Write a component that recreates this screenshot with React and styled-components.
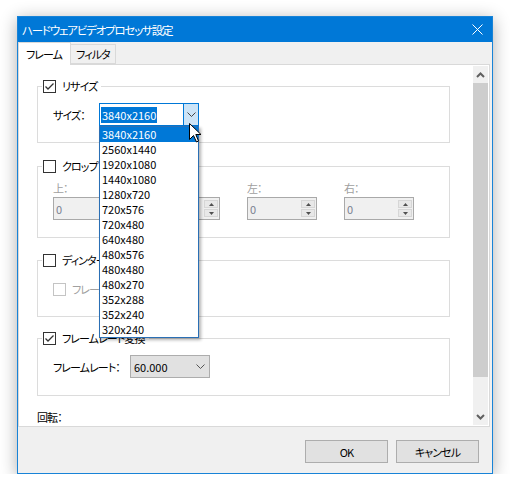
import React from "react";
import styled, { createGlobalStyle } from "styled-components";

const GlobalStyle = createGlobalStyle`
html, body {
  margin: 0;
  padding: 0;
  background: #ffffff;
}
body {
  font-family: "Noto Sans CJK JP", "Noto Sans", sans-serif;
  font-size: 11px;
  font-feature-settings: "palt";
  color: #000;
}
`;

// Japanese UI text: Noto is wider than Meiryo UI, so it is tightened
const jp = `
letter-spacing: -0.9px;
white-space: nowrap;
`;

const Page = styled.div`
padding: 16px 0 0 17px;
`;

const Window = styled.div`
box-sizing: border-box;
width: 476px;
height: 458px;
border: 1px solid #1883d7;
background: #f0f0f0;
box-shadow: 0 3px 16px rgba(0, 0, 0, 0.32);
display: flex;
flex-direction: column;
`;

const TitleBar = styled.div`
height: 25px;
flex-shrink: 0;
background: #0078d7;
color: #fff;
display: flex;
align-items: center;
justify-content: space-between;
padding: 0 9px 0 4px;
line-height: 16px;
`;

const TitleText = styled.span`
${jp}
letter-spacing: -1.2px;
font-size: 11.5px;
`;

const TabStrip = styled.div`
display: flex;
align-items: flex-end;
height: 22px;
flex-shrink: 0;
position: relative;
z-index: 2;
`;

const Tab = styled.div`
${jp}
box-sizing: border-box;
height: ${p => (p.$active ? 23 : 20)}px;
margin-bottom: ${p => (p.$active ? -1 : 0)}px;
padding: 0 ${p => (p.$active ? 8 : 5)}px 0 ${p => (p.$active ? 7 : 5)}px;
background: ${p => (p.$active ? "#ffffff" : "#f0f0f0")};
border: 1px solid #d9d9d9;
border-bottom: ${p => (p.$active ? "none" : "1px solid #d9d9d9")};
border-left: ${p => (p.$active ? "1px solid #d9d9d9" : "none")};
display: flex;
align-items: center;
line-height: 16px;
`;

const Panel = styled.div`
box-sizing: border-box;
height: 363px;
margin-right: 2px;
border: 1px solid #d9d9d9;
background: #fff;
padding: 1px;
display: flex;
`;

const ScrollArea = styled.div`
flex: 1;
overflow: hidden;
padding: 12px 23px 0 17px;
`;

const Scrollbar = styled.div`
width: 15px;
display: flex;
flex-direction: column;
background: #f0f0f0;
`;

const ScrollButton = styled.div`
height: 17px;
display: flex;
align-items: center;
justify-content: center;
`;

const ScrollThumb = styled.div`
height: 294px;
background: #cdcdcd;
`;

const ScrollTrack = styled.div`
flex: 1;
`;

const Group = styled.fieldset`
margin: ${p => p.$top || 0}px 0 0;
border: 1px solid #dcdcdc;
padding: ${p => p.$pt}px 15px ${p => p.$pb}px;
min-inline-size: 0;
`;

const Legend = styled.legend`
padding: 0 4px 0 1px;
margin-left: -11px;
height: 16px;
`;

const LegendInner = styled.span`
${jp}
display: flex;
align-items: center;
gap: 6px;
height: 16px;
line-height: 16px;
`;

const Box = styled.span`
box-sizing: border-box;
width: 13px;
height: 13px;
border: 1px solid ${p => (p.$disabled ? "#c4c4c4" : "#333333")};
background: #fff;
display: flex;
align-items: center;
justify-content: center;
flex-shrink: 0;
`;

const Row = styled.div`
display: flex;
align-items: center;
gap: ${p => p.$gap || 0}px;
`;

const Label = styled.span`
${jp}
width: ${p => (p.$w ? `${p.$w}px` : "auto")};
flex-shrink: 0;
line-height: 16px;
color: ${p => (p.$disabled ? "#a0a0a0" : "#000")};
`;

const ComboWrap = styled.div`
position: relative;
z-index: 10;
`;

const Combo = styled.div`
box-sizing: border-box;
width: ${p => p.$w}px;
height: 23px;
border: 1px solid ${p => (p.$focus ? "#0078d7" : "#adadad")};
background: ${p => (p.$focus ? "#ffffff" : "#e1e1e1")};
display: flex;
align-items: center;
`;

const ComboText = styled.div`
flex: 1;
padding-left: ${p => (p.$focus ? 1 : 3)}px;
line-height: 16px;
display: flex;
`;

const Highlight = styled.span`
background: #0078d7;
color: #fff;
padding: 0 1px;
line-height: 16px;
`;

const ComboButton = styled.div`
box-sizing: border-box;
width: ${p => (p.$focus ? 15 : 18)}px;
height: 100%;
background: ${p => (p.$focus ? "#cce4f7" : "transparent")};
border-left: ${p => (p.$focus ? "1px solid #0078d7" : "none")};
display: flex;
align-items: center;
justify-content: center;
`;

const DropList = styled.div`
position: absolute;
left: 0;
top: 100%;
box-sizing: border-box;
width: 100px;
border: 1px solid #2a6fb5;
background: #fff;
box-shadow: 2px 2px 3px rgba(0, 0, 0, 0.3);
`;

const DropItem = styled.div`
height: 15px;
line-height: 15px;
padding-left: 2px;
background: ${p => (p.$sel ? "#0078d7" : "transparent")};
color: ${p => (p.$sel ? "#fff" : "#000")};
`;

const Cursor = styled.svg`
position: absolute;
left: 90px;
top: 20px;
`;

const SpinRow = styled.div`
display: flex;
gap: 27px;
`;

const SpinCol = styled.div`
width: 70px;
display: flex;
flex-direction: column;
gap: 1px;
`;

const Spin = styled.div`
box-sizing: border-box;
height: 23px;
border: 1px solid #a9a9a9;
background: #f0f0f0;
display: flex;
align-items: center;
padding: 0 1px 0 2px;
`;

const SpinValue = styled.span`
flex: 1;
color: #7b8191;
line-height: 16px;
`;

const SpinButtons = styled.div`
display: flex;
flex-direction: column;
gap: 1px;
`;

const SpinButton = styled.div`
width: 14px;
height: 8px;
background: #e8e8e8;
border: 1px solid #d6d6d6;
box-sizing: border-box;
display: flex;
align-items: center;
justify-content: center;
`;

const Rotate = styled.div`
${jp}
margin-top: 13px;
line-height: 16px;
`;

const Footer = styled.div`
flex: 1;
display: flex;
justify-content: flex-end;
align-items: flex-start;
gap: 8px;
padding: 13px 13px 0 0;
`;

const Button = styled.div`
${jp}
box-sizing: border-box;
width: ${p => p.$w}px;
height: 23px;
background: #e1e1e1;
border: 1px solid #adadad;
display: flex;
align-items: center;
justify-content: center;
line-height: 16px;
`;

const Check = ({ checked, disabled }) => (
  <Box $disabled={disabled}>
    {checked && (
      <svg width="11" height="11" viewBox="0 0 11 11">
        <path d="M1.5 5.5 L4 8 L9.5 2.5" fill="none" stroke="#333" strokeWidth="1.3" />
      </svg>
    )}
  </Box>
);

const Chevron = ({ color = "#333" }) => (
  <svg width="9" height="5" viewBox="0 0 9 5">
    <path d="M0.5 0.5 L4.5 4.5 L8.5 0.5" fill="none" stroke={color} strokeWidth="1" />
  </svg>
);

const ScrollArrow = ({ up }) => (
  <svg width="9" height="6" viewBox="0 0 9 6">
    <path d={up ? "M1 5 L4.5 1.5 L8 5" : "M1 1 L4.5 4.5 L8 1"} fill="none" stroke="#606060" strokeWidth="2" />
  </svg>
);

const Tri = ({ up }) => (
  <svg width="5" height="3" viewBox="0 0 5 3">
    <path d={up ? "M0 3 L2.5 0 L5 3 Z" : "M0 0 L2.5 3 L5 0 Z"} fill="#505050" />
  </svg>
);

const sizes = [
  "3840x2160", "2560x1440", "1920x1080", "1440x1080", "1280x720", "720x576", "720x480",
  "640x480", "480x576", "480x480", "480x270", "352x288", "352x240", "320x240",
];

const crop = ["上：", "下：", "左：", "右："];

const App = () => {
  return (
    <Page>
      <GlobalStyle />
      <Window>
        <TitleBar>
          <TitleText>ハードウェアビデオプロセッサ設定</TitleText>
          <svg width="11" height="11" viewBox="0 0 11 11">
            <path d="M0.5 0.5 L10.5 10.5 M10.5 0.5 L0.5 10.5" stroke="#fff" strokeWidth="1" />
          </svg>
        </TitleBar>
        <TabStrip>
          <Tab $active>フレーム</Tab>
          <Tab>フィルタ</Tab>
        </TabStrip>
        <Panel>
          <ScrollArea>
            <Group $pt={9} $pb={16}>
              <Legend>
                <LegendInner><Check checked />リサイズ</LegendInner>
              </Legend>
              <Row>
                <Label $w={46}>サイズ：</Label>
                <ComboWrap>
                  <Combo $w={100} $focus>
                    <ComboText $focus><Highlight>3840x2160</Highlight></ComboText>
                    <ComboButton $focus><Chevron color="#444" /></ComboButton>
                  </Combo>
                  <DropList>
                    {sizes.map((s, i) => (
                      <DropItem key={s} $sel={i === 0}>{s}</DropItem>
                    ))}
                  </DropList>
                  <Cursor width="13" height="20" viewBox="0 0 13 20">
                    <path d="M0.5 0.5 L0.5 16.5 L4.5 12.5 L7.5 19 L9.5 18 L6.8 11.5 L12 11.5 Z" fill="#fff" stroke="#000" strokeWidth="1" />
                  </Cursor>
                </ComboWrap>
              </Row>
            </Group>

            <Group $top={15} $pt={6} $pb={17}>
              <Legend>
                <LegendInner><Check />クロップ</LegendInner>
              </Legend>
              <SpinRow>
                {crop.map(c => (
                  <SpinCol key={c}>
                    <Label $disabled>{c}</Label>
                    <Spin>
                      <SpinValue>0</SpinValue>
                      <SpinButtons>
                        <SpinButton><Tri up /></SpinButton>
                        <SpinButton><Tri /></SpinButton>
                      </SpinButtons>
                    </Spin>
                  </SpinCol>
                ))}
              </SpinRow>
            </Group>

            <Group $top={14} $pt={13} $pb={19}>
              <Legend>
                <LegendInner><Check />ディンターレース</LegendInner>
              </Legend>
              <Row $gap={6}>
                <Check disabled />
                <Label $disabled>フレームを補間する</Label>
              </Row>
            </Group>

            <Group $top={13} $pt={9} $pb={17}>
              <Legend>
                <LegendInner><Check checked />フレームレート変換</LegendInner>
              </Legend>
              <Row>
                <Label $w={77}>フレームレート：</Label>
                <Combo $w={80}>
                  <ComboText>60.000</ComboText>
                  <ComboButton><Chevron color="#555" /></ComboButton>
                </Combo>
              </Row>
            </Group>

            <Rotate>回転：</Rotate>
          </ScrollArea>
          <Scrollbar>
            <ScrollButton><ScrollArrow up /></ScrollButton>
            <ScrollThumb />
            <ScrollTrack />
            <ScrollButton><ScrollArrow /></ScrollButton>
          </Scrollbar>
        </Panel>
        <Footer>
          <Button $w={83}>OK</Button>
          <Button $w={83}>キャンセル</Button>
        </Footer>
      </Window>
    </Page>
  );
};

export default App;
